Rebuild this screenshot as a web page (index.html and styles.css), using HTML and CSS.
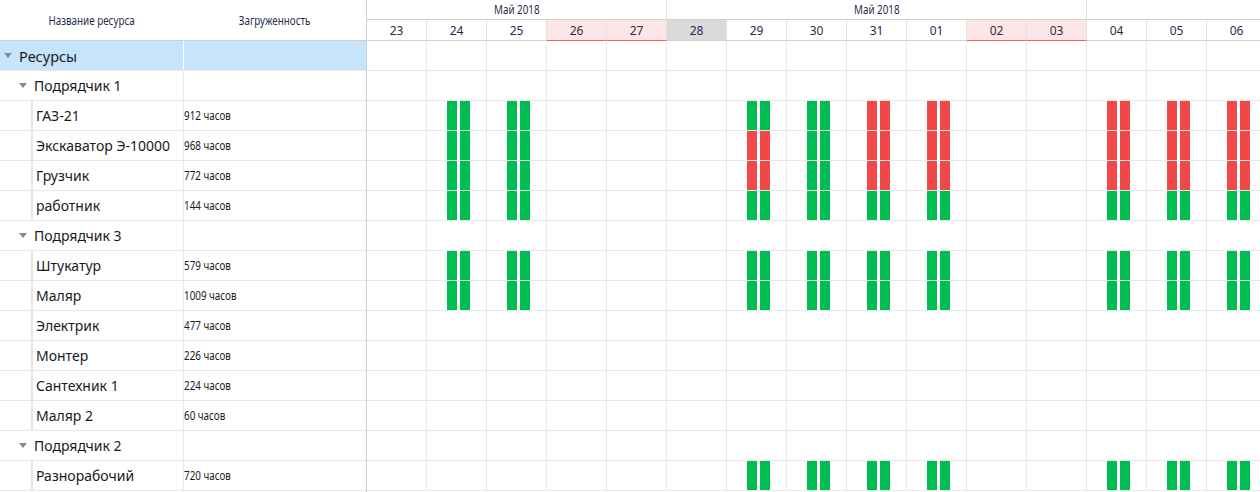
FILE: index.html
```html
<!DOCTYPE html>
<html lang="ru">

<head>
  <meta charset="UTF-8">
  <meta name="viewport" content="width=device-width, initial-scale=1.0">
  <title>Загрузка ресурсов</title>
  <link rel="stylesheet" href="styles.css">
</head>

<body>
  <div class="gantt">
    <div class="grid">
      <div class="grid-header">
        <div class="col-name"><span class="narrow">Название ресурса</span></div>
        <div class="col-load"><span class="narrow">Загруженность</span></div>
      </div>
      <div id="gridBody"></div>
    </div>
    <div class="timeline">
      <div class="scale-months" id="scaleMonths"></div>
      <div class="scale-days" id="scaleDays"></div>
      <div id="timelineBody"></div>
    </div>
  </div>

  <script>
    const days = ['23', '24', '25', '26', '27', '28', '29', '30', '31', '01', '02', '03', '04', '05', '06'];
    const weekends = ['26', '27', '02', '03'];
    const today = '28';
    const months = [
      { label: 'Май 2018', days: 5 },
      { label: 'Май 2018', days: 7 },
      { label: '', days: 7 },
    ];

    // load per day: g - normal, r - overloaded, . - free
    const resources = [
      { name: 'Ресурсы', level: 0 },
      { name: 'Подрядчик 1', level: 1 },
      { name: 'ГАЗ-21', load: '912 часов', bars: '.gg...ggrr..rrr' },
      { name: 'Экскаватор Э-10000', load: '968 часов', bars: '.gg...rgrr..rrr' },
      { name: 'Грузчик', load: '772 часов', bars: '.gg...rgrr..rrr' },
      { name: 'работник', load: '144 часов', bars: '.gg...gggg..ggg' },
      { name: 'Подрядчик 3', level: 1 },
      { name: 'Штукатур', load: '579 часов', bars: '.gg...gggg..ggg' },
      { name: 'Маляр', load: '1009 часов', bars: '.gg...gggg..ggg' },
      { name: 'Электрик', load: '477 часов' },
      { name: 'Монтер', load: '226 часов' },
      { name: 'Сантехник 1', load: '224 часов' },
      { name: 'Маляр 2', load: '60 часов' },
      { name: 'Подрядчик 2', level: 1 },
      { name: 'Разнорабочий', load: '720 часов', bars: '......gggg..ggg' },
    ];

    document.getElementById('scaleMonths').innerHTML = months.map(m => `
      <div class="month" style="width: ${m.days * 60}px"><span class="narrow">${m.label}</span></div>
    `).join('');

    document.getElementById('scaleDays').innerHTML = days.map(d => {
      let cls = 'day';
      if (weekends.includes(d)) cls += ' weekend';
      if (d === today) cls += ' today';
      return `<div class="${cls}"><span class="narrow">${d}</span></div>`;
    }).join('');

    document.getElementById('gridBody').innerHTML = resources.map(r => {
      if (r.level === 0) {
        return `<div class="grid-row root"><div class="col-name"><span class="toggle"></span>${r.name}</div><div class="col-load"></div></div>`;
      }
      if (r.level === 1) {
        return `<div class="grid-row group"><div class="col-name"><span class="toggle"></span>${r.name}</div><div class="col-load"></div></div>`;
      }
      return `<div class="grid-row leaf"><div class="col-name"><span class="tree-line"></span>${r.name}</div><div class="col-load"><span class="narrow">${r.load}</span></div></div>`;
    }).join('');

    document.getElementById('timelineBody').innerHTML = resources.map(r => {
      const bars = r.bars || '...............';
      const cells = days.map((d, i) => {
        const type = bars[i];
        if (type === '.') return '<div class="cell"></div>';
        const cls = type === 'r' ? 'bar over' : 'bar';
        return `<div class="cell"><span class="${cls}"></span><span class="${cls}"></span></div>`;
      }).join('');
      return `<div class="timeline-row">${cells}</div>`;
    }).join('');
  </script>
</body>

</html>
```

FILE: styles.css
```css
body {
  margin: 0;
  font-family: 'Noto Sans', sans-serif;
  color: #1a1a1a;
  background-color: #fff;
}

.gantt {
  display: flex;
  height: 492px;
  overflow: hidden;
}

/* condensed captions: header labels, dates and hours */
.narrow {
  display: inline-block;
  font-family: 'Noto Sans', sans-serif;
  font-size: 12px;
  transform: scaleX(0.82);
}

/* left grid */

.grid {
  width: 367px;
  flex-shrink: 0;
  box-sizing: border-box;
  border-right: 1px solid #cfcfcf;
}

.grid-header {
  display: flex;
  height: 41px;
  box-sizing: border-box;
  border-bottom: 1px solid #cfcfcf;
  color: #1f2d4d;
}

.grid-header div {
  display: flex;
  align-items: center;
  justify-content: center;
}

.col-name {
  width: 184px;
  flex-shrink: 0;
}

.col-load {
  flex-grow: 1;
}

.grid-row {
  display: flex;
  height: 30px;
  box-sizing: border-box;
  border-bottom: 1px solid #e8e8e8;
}

.grid-row .col-name {
  display: flex;
  align-items: center;
  box-sizing: border-box;
  border-right: 1px solid #e8e8e8;
  font-size: 14px;
}

.grid-row .col-load {
  display: flex;
  align-items: center;
}

.grid-row .col-load .narrow {
  transform-origin: left center;
}

.grid-row.root {
  background-color: #c6e4fc;
}

.grid-row.root .col-name {
  padding-left: 4px;
  font-size: 14.5px;
  border-right-color: #fff;
}

.grid-row.group .col-name {
  padding-left: 19px;
}

.grid-row.leaf .col-name {
  padding-left: 31px;
  align-items: stretch;
  line-height: 29px;
}

.toggle {
  width: 0;
  height: 0;
  margin-right: 7px;
  border-left: 4px solid transparent;
  border-right: 4px solid transparent;
  border-top: 5px solid #8a8a8a;
}

.tree-line {
  width: 2px;
  margin-right: 3px;
  background-color: #e6e6e6;
}

/* timeline */

.timeline {
  flex-grow: 1;
  overflow: hidden;
}

.scale-months,
.scale-days,
.timeline-row {
  display: flex;
  width: 900px;
}

.scale-months {
  height: 20px;
  box-sizing: border-box;
  border-bottom: 1px solid #cfcfcf;
}

.month,
.day {
  flex-shrink: 0;
  display: flex;
  align-items: center;
  justify-content: center;
  box-sizing: border-box;
  border-right: 1px solid #e3e3e3;
  color: #1f2d4d;
}

.scale-days {
  height: 21px;
  box-sizing: border-box;
  border-bottom: 1px solid #cfcfcf;
}

.day {
  width: 60px;
  height: 20px;
}

.day .narrow {
  transform: none;
}

.day.weekend {
  background-color: #ffe6e6;
  border-bottom: 1px solid #f26161;
  height: 21px;
}

.day.today {
  background-color: #dadada;
}

.timeline-row {
  height: 30px;
  box-sizing: border-box;
  border-bottom: 1px solid #e8e8e8;
}

.cell {
  width: 60px;
  flex-shrink: 0;
  display: flex;
  gap: 3px;
  padding-left: 20px;
  box-sizing: border-box;
  border-right: 1px solid #e8e8e8;
}

.bar {
  width: 10px;
  background-color: #00bd52;
}

.bar.over {
  background-color: #f04747;
}
```
